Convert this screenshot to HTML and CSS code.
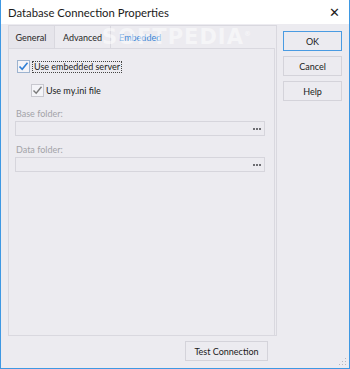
FILE: index.html
```html
<!DOCTYPE html>
<html lang="en">
<head>
    <meta charset="UTF-8">
    <title>Database Connection Properties</title>
    <link rel="stylesheet" href="styles.css">
</head>
<body>
<div class="window">
    <div class="titlebar">
        <span class="title">Database Connection Properties</span>
        <span class="close">&#x2715;</span>
    </div>

    <div class="content">
        <div class="left">
            <div class="tabs">
                <div class="tab-row">
                    <span class="tab first">General</span>
                    <span class="tab">Advanced</span>
                    <span class="tab active">Embedded</span>
                </div>
                <div class="panel">
                    <label class="check-line">
                        <span class="box on">
                            <svg width="11" height="11" viewBox="0 0 11 11"><path d="M1.5 5.5 L4.2 8.3 L9.5 1.8" fill="none" stroke="#2f7fd6" stroke-width="1.6"/></svg>
                        </span>
                        <span class="focus">Use embedded server</span>
                    </label>
                    <label class="check-line sub">
                        <span class="box gray">
                            <svg width="11" height="11" viewBox="0 0 11 11"><path d="M1.5 5.5 L4.2 8.3 L9.5 1.8" fill="none" stroke="#7a7a7a" stroke-width="1.4"/></svg>
                        </span>
                        <span>Use my.ini file</span>
                    </label>

                    <div class="field base">
                        <div class="field-label">Base folder:</div>
                        <div class="input"><span class="dots"><i></i><i></i><i></i></span></div>
                    </div>
                    <div class="field data">
                        <div class="field-label">Data folder:</div>
                        <div class="input"><span class="dots"><i></i><i></i><i></i></span></div>
                    </div>
                </div>
            </div>
            <div class="footer">
                <button class="btn test">Test Connection</button>
            </div>
        </div>

        <div class="side">
            <button class="btn default">OK</button>
            <button class="btn">Cancel</button>
            <button class="btn">Help</button>
        </div>
    </div>

    <div class="watermark">SOFTPEDIA<sup>&reg;</sup></div>

    <svg class="grip" width="8" height="8" viewBox="0 0 8 8">
        <rect x="6" y="0" width="1" height="1" fill="#b8b8c0"/>
        <rect x="3" y="3" width="1" height="1" fill="#b8b8c0"/>
        <rect x="6" y="3" width="1" height="1" fill="#b8b8c0"/>
        <rect x="0" y="6" width="1" height="1" fill="#b8b8c0"/>
        <rect x="3" y="6" width="1" height="1" fill="#b8b8c0"/>
        <rect x="6" y="6" width="1" height="1" fill="#b8b8c0"/>
    </svg>
</div>
</body>
</html>
```

FILE: styles.css
```css
body {
    margin: 0;
    font-family: Lato, 'Liberation Sans', sans-serif;
    font-size: 9px;
    color: #1b1b1b;
}
.window {
    position: relative;
    width: 350px;
    height: 369px;
    box-sizing: border-box;
    border: 1px solid #3e98e3;
    border-top: none;
    background: #ecebf0;
    overflow: hidden;
}
.titlebar {
    height: 24px;
    background: #fff;
    display: flex;
    align-items: center;
    justify-content: space-between;
    padding: 0 7px 0 7px;
    font-size: 11.3px;
}
.close {
    font-size: 13px;
    color: #222;
    margin-right: 2px;
}
.content {
    display: flex;
    padding: 1px 0 0 7px;
}
.left { width: 269px; }
.tabs {
    height: 309px;
    border: 1px solid #d9d8df;
    display: flex;
    flex-direction: column;
}
.tab-row {
    height: 22px;
    display: flex;
    align-items: stretch;
}
.tab {
    display: flex;
    align-items: center;
    padding: 1px 8px 0 8px;
    color: #262626;
    border-right: 1px solid #d9d8df;
}
.tab.first {
    background: #e6e5eb;
    width: 28px;
    justify-content: center;
    padding: 1px 9px 0 8px;
}
.tab.active {
    color: #3a86d6;
    border-right: none;
}
.panel {
    flex: 1;
    border-top: 1px solid #d9d8df;
    border-right: 1px solid #d9d8df;
    margin-right: 1px;
    padding: 11px 9px 0 6px;
}
.check-line {
    display: flex;
    align-items: center;
    gap: 2px;
    height: 13px;
    margin-left: 2px;
}
.check-line.sub {
    margin: 11px 0 0 16px;
}
.box {
    width: 11px;
    height: 11px;
    border: 1px solid #9db3cf;
    background: #f4f4f8;
    display: flex;
}
.box.gray { border-color: #c8c8cf; }
.focus {
    border: 1px dotted #444;
    padding: 0 1px;
    line-height: 10px;
}
.field.base { margin-top: 11px; }
.field.data { margin-top: 8px; }
.field-label {
    color: #a3a3a8;
    height: 12px;
    line-height: 12px;
    margin-left: 1px;
}
.input {
    margin-top: 1px;
    height: 13px;
    border: 1px solid #d6d5dc;
    display: flex;
    justify-content: flex-end;
    align-items: center;
    padding-right: 3px;
}
.dots {
    display: flex;
    gap: 1px;
}
.dots i {
    width: 2px;
    height: 2px;
    background: #6d6d72;
}
.footer {
    display: flex;
    justify-content: flex-end;
    padding: 5px 9px 0 0;
}
.btn {
    font-family: Lato, 'Liberation Sans', sans-serif;
    font-size: 9px;
    color: #1b1b1b;
    background: #ecebf0;
    border: 1px solid #d4d3da;
    height: 20px;
    width: 59px;
    padding: 0;
    margin: 0;
}
.btn.test { width: 83px; }
.btn.default { border-color: #4a9be2; }
.side {
    margin-left: 6px;
    padding-top: 6px;
    display: flex;
    flex-direction: column;
    gap: 5px;
}
.watermark {
    position: absolute;
    left: 101px;
    top: 25px;
    font-family: 'DejaVu Sans', sans-serif;
    font-weight: bold;
    font-size: 21px;
    letter-spacing: 1px;
    color: rgba(255, 255, 255, 0.5);
}
.watermark sup { font-size: 7px; }
.grip {
    position: absolute;
    right: 2px;
    bottom: 2px;
}
```
